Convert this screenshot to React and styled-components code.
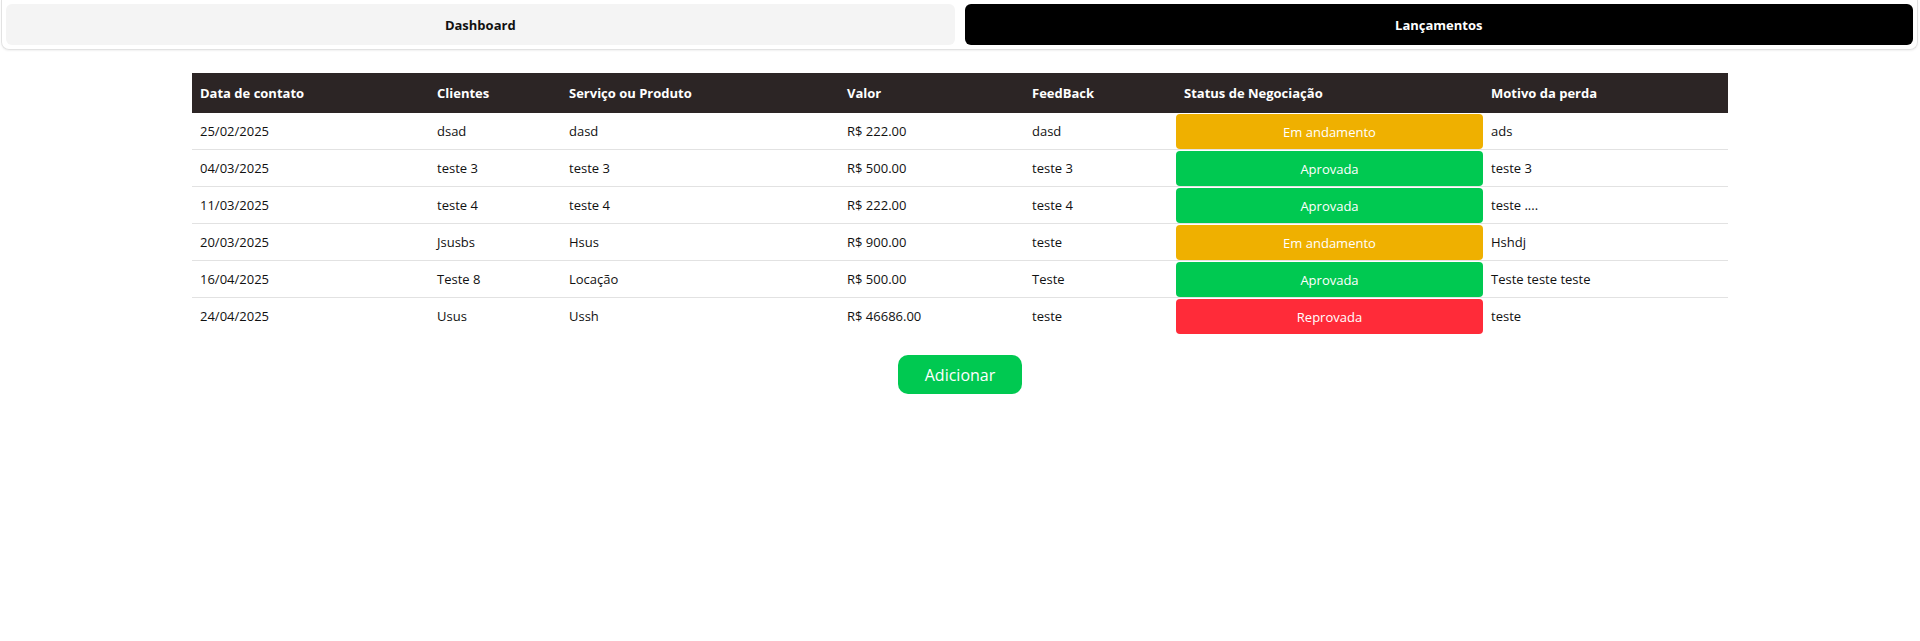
import styled, { createGlobalStyle } from "styled-components";

const GlobalStyle = createGlobalStyle`
  body {
    margin: 0;
    background: #fff;
    font-family: "Segoe UI", "Open Sans", sans-serif;
    color: #111;
  }
`;

const Nav = styled.nav`
  display: flex;
  gap: 10px;
  margin: 0 2px 0 1px;
  padding: 4px 4px;
  border: 1px solid #e2e2e2;
  border-top: none;
  border-radius: 0 0 8px 8px;
  box-shadow: 0 1px 2px rgba(0, 0, 0, 0.06);
`;

const NavButton = styled.button`
  flex: 1;
  height: 41px;
  border: none;
  border-radius: 6px;
  font-family: inherit;
  font-size: 13px;
  font-weight: 700;
  cursor: pointer;
  background: ${(p) => (p.$active ? "#000" : "#f4f4f4")};
  color: ${(p) => (p.$active ? "#fff" : "#111")};
`;

const Main = styled.main`
  display: flex;
  flex-direction: column;
  align-items: center;
  padding-top: 23px;
`;

const Table = styled.table`
  width: 80%;
  table-layout: fixed;
  border-collapse: collapse;
  font-size: 13px;
`;

const Th = styled.th`
  height: 40px;
  padding: 0 8px;
  text-align: left;
  background: #2c2525;
  color: #fff;
  font-weight: 700;
`;

const Tr = styled.tr`
  &:not(:last-child) {
    border-bottom: 1px solid #e2e2e2;
  }
`;

const Td = styled.td`
  height: 36px;
  padding: 0 8px;
  white-space: nowrap;
`;

const StatusCell = styled.td`
  padding: 1px 0 0;
`;

const statusColors = {
  "Em andamento": "#efb000",
  Aprovada: "#00c951",
  Reprovada: "#ff2b39",
};

const Badge = styled.div`
  display: flex;
  align-items: center;
  justify-content: center;
  height: 35px;
  border-radius: 4px;
  color: #fff;
  background: ${(p) => statusColors[p.$status]};
`;

const AddButton = styled.button`
  margin-top: 21px;
  width: 124px;
  height: 39px;
  border: none;
  border-radius: 10px;
  background: #00c951;
  color: #fff;
  font-family: inherit;
  font-size: 16px;
  cursor: pointer;
`;

const columns = [
  { label: "Data de contato", width: 237 },
  { label: "Clientes", width: 132 },
  { label: "Serviço ou Produto", width: 278 },
  { label: "Valor", width: 185 },
  { label: "FeedBack", width: 152 },
  { label: "Status de Negociação", width: 307 },
  { label: "Motivo da perda", width: 245 },
];

const rows = [
  ["25/02/2025", "dsad", "dasd", "R$ 222.00", "dasd", "Em andamento", "ads"],
  ["04/03/2025", "teste 3", "teste 3", "R$ 500.00", "teste 3", "Aprovada", "teste 3"],
  ["11/03/2025", "teste 4", "teste 4", "R$ 222.00", "teste 4", "Aprovada", "teste ...."],
  ["20/03/2025", "Jsusbs", "Hsus", "R$ 900.00", "teste", "Em andamento", "Hshdj"],
  ["16/04/2025", "Teste 8", "Locação", "R$ 500.00", "Teste", "Aprovada", "Teste teste teste"],
  ["24/04/2025", "Usus", "Ussh", "R$ 46686.00", "teste", "Reprovada", "teste"],
];

export default function App() {
  return (
    <>
      <GlobalStyle />
      <Nav>
        <NavButton>Dashboard</NavButton>
        <NavButton $active>Lançamentos</NavButton>
      </Nav>
      <Main>
        <Table>
          <colgroup>
            {columns.map((c) => (
              <col key={c.label} style={{ width: `${(c.width / 1536) * 100}%` }} />
            ))}
          </colgroup>
          <thead>
            <tr>
              {columns.map((c) => (
                <Th key={c.label}>{c.label}</Th>
              ))}
            </tr>
          </thead>
          <tbody>
            {rows.map((r, i) => (
              <Tr key={i}>
                <Td>{r[0]}</Td>
                <Td>{r[1]}</Td>
                <Td>{r[2]}</Td>
                <Td>{r[3]}</Td>
                <Td>{r[4]}</Td>
                <StatusCell>
                  <Badge $status={r[5]}>{r[5]}</Badge>
                </StatusCell>
                <Td>{r[6]}</Td>
              </Tr>
            ))}
          </tbody>
        </Table>
        <AddButton>Adicionar</AddButton>
      </Main>
    </>
  );
}
